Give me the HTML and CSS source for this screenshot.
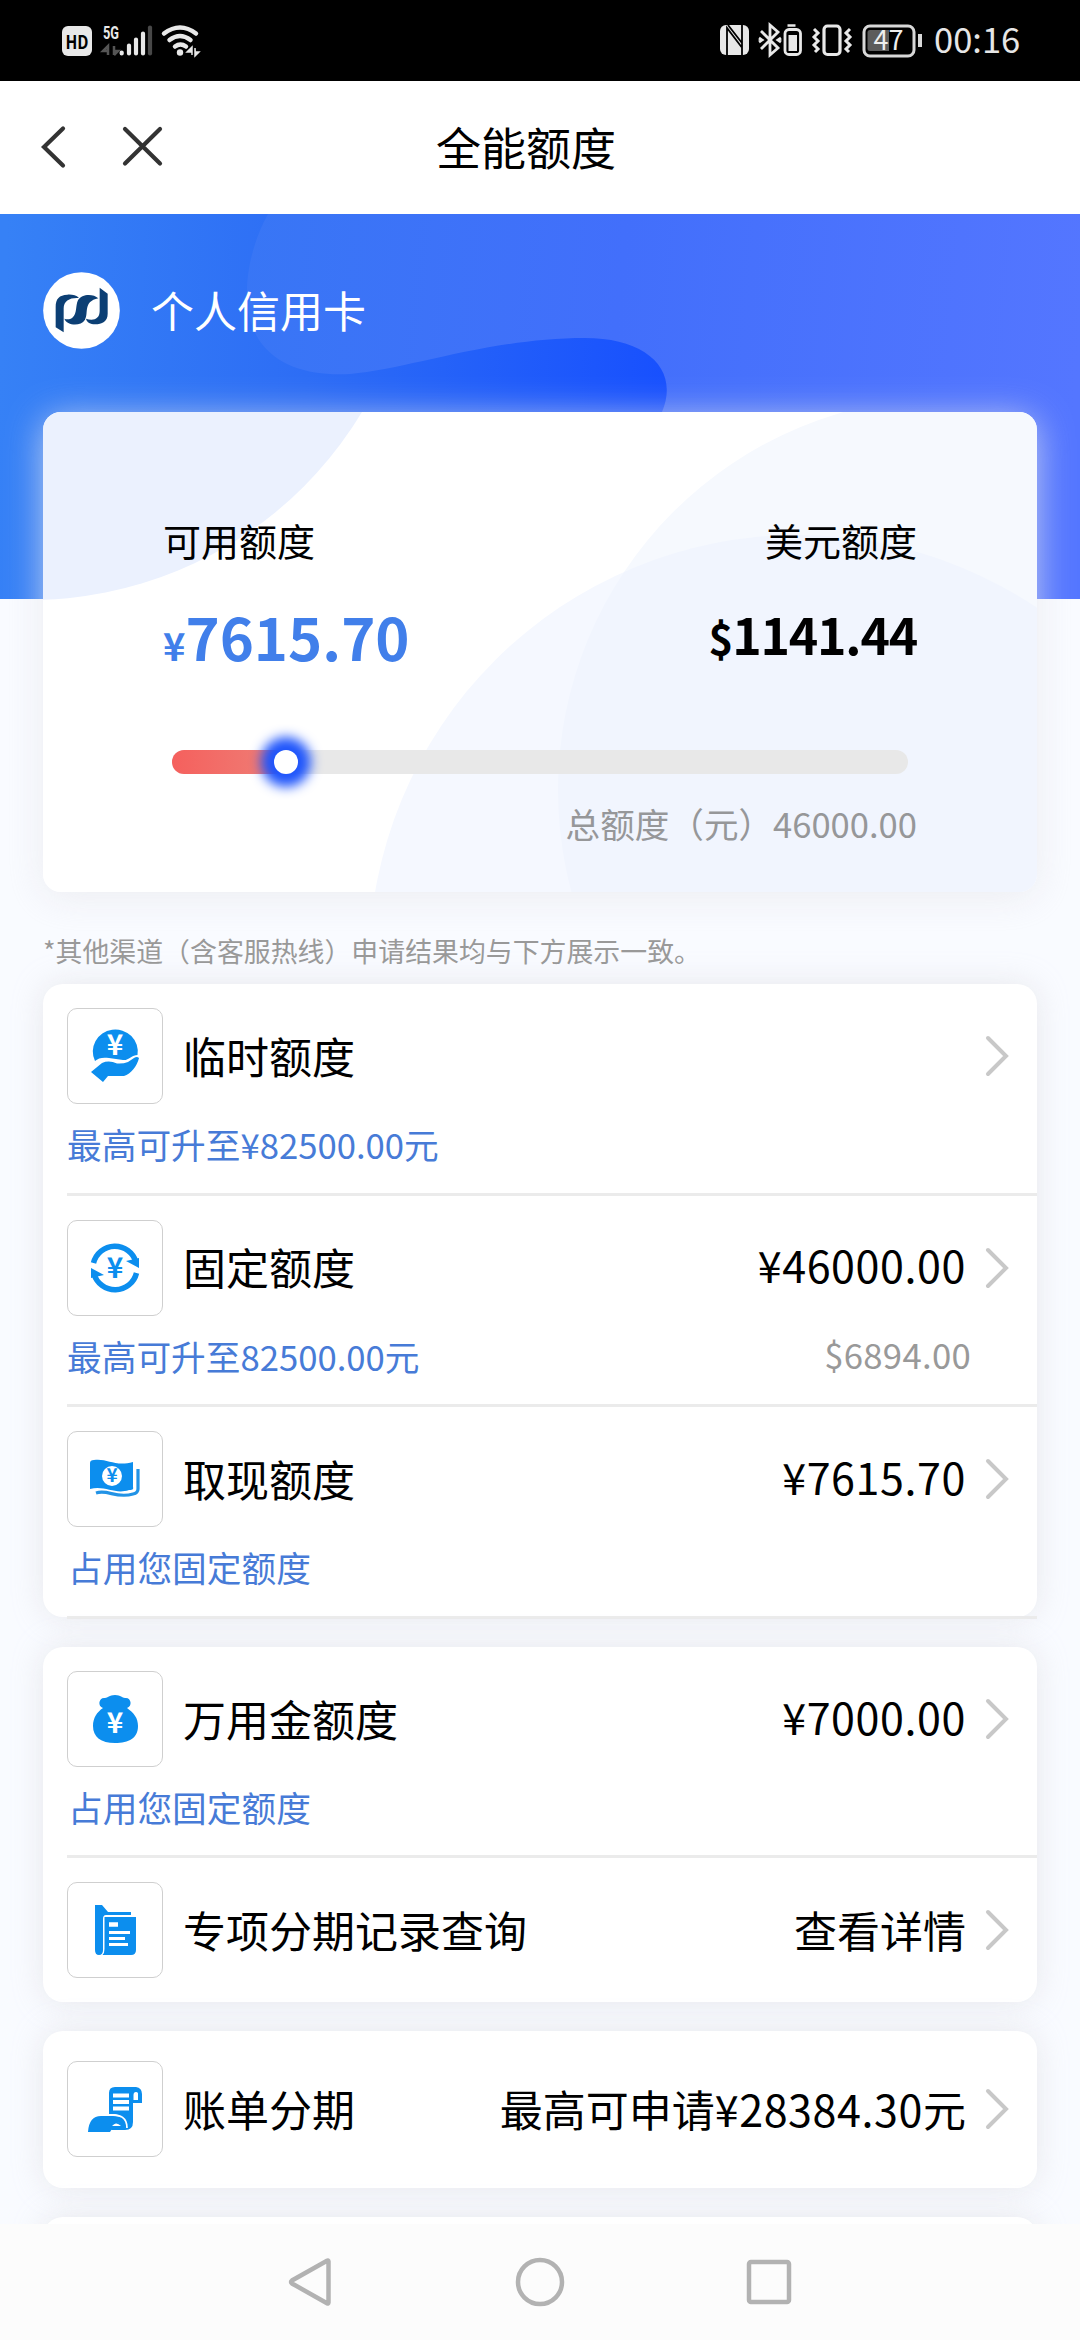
FILE: index.html
```html
<!DOCTYPE html>
<html lang="zh-CN">
<head>
<meta charset="utf-8">
<title>全能额度</title>
<link rel="stylesheet" href="styles.css">
</head>
<body>
<div class="screen">
  <header class="status">
    <svg class="status-left" viewBox="0 0 160 81" width="160" height="81">
      <rect x="2" y="26" width="30" height="30" rx="6" fill="#e8e8e8"/>
      <text x="17" y="48.500" class="hd" textLength="23" lengthAdjust="spacingAndGlyphs">HD</text>
      <text x="43" y="38.500" class="fiveg" textLength="16" lengthAdjust="spacingAndGlyphs">5G</text>
      <path d="M48 55V46l-5 5h5M54 46v9m0-4h4l-4 4" stroke="#555" stroke-width="2.500" fill="none"/>
      <g stroke="#e8e8e8" stroke-width="4.200" stroke-linecap="round"><path d="M61.700 53.500v-1M69 53.500v-8M76 53.500v-14M83 53.500v-20"/><path d="M90 53.500v-26" stroke="#484848"/></g>
      <g fill="none" stroke="#e8e8e8" stroke-width="4.500" stroke-linecap="round"><path d="M104 33.500q16-12 32 0M109.500 40q10.500-8 21 0M115 46.500q5.500-4 11 0"/></g>
      <circle cx="120" cy="52.500" r="3.200" fill="#e8e8e8"/>
      <path d="M132 55v-8l-5 5h5zM135 48v8l4-4h-3" fill="#e8e8e8" stroke="#e8e8e8" stroke-width="1.500"/>
    </svg>
    <div class="status-right">
      <svg viewBox="0 0 210 81" width="210" height="81">
        <rect x="2" y="25" width="29" height="30" rx="6" fill="#e8e8e8"/>
        <path d="M9 55V28L23.500 47M10 25L24 43V55M24 25v19" stroke="#000" stroke-width="1.800" fill="none"/>
        <path d="M43 31l17 17-8 7V25l8 7-17 17M41 38l3 2-3 2M63 38l-3 2 3 2" fill="none" stroke="#e8e8e8" stroke-width="2.800"/>
        <path d="M69.500 25.500h8" stroke="#e8e8e8" stroke-width="2.500"/>
        <rect x="67" y="29.500" width="15.500" height="25" rx="4" fill="none" stroke="#e8e8e8" stroke-width="2.800"/>
        <rect x="70.500" y="35" width="8.500" height="16" fill="#e8e8e8"/>
        <rect x="106" y="26" width="16" height="28.500" rx="3.500" fill="none" stroke="#e8e8e8" stroke-width="3.200"/>
        <path d="M96 29l4 4-4 4 4 4-4 4 4 4-3 3M132 29l-4 4 4 4-4 4 4 4-4 4 3 3" fill="none" stroke="#e8e8e8" stroke-width="3"/>
        <rect x="146" y="26" width="50" height="30" rx="6" fill="none" stroke="#d8d8d8" stroke-width="3"/>
        <path d="M152 30h19v21h-19q-2.500 0-2.500-2.500v-16q0-2.500 2.500-2.500z" fill="#5c5c5c"/>
        <path d="M202 34v13" stroke="#d8d8d8" stroke-width="4"/>
        <text x="170.500" y="50" class="batt">47</text>
      </svg>
      <span class="clock">00:16</span>
    </div>
  </header>

  <nav class="titlebar">
    <svg class="titlebar-icons" viewBox="0 0 180 132" width="180" height="132" fill="none" stroke="#333" stroke-width="4.200" stroke-linecap="round">
      <path d="M63 47.500L44 66l19 18.500M125 48l35 34.500M160 48l-35 34.500"/>
    </svg>
    <h1 class="page-title">全能额度</h1>
    <span class="titlebar-end"></span>
  </nav>

  <main class="content">
    <section class="hero">
      <svg class="hero-bg" viewBox="0 0 1080 385" width="1080" height="385">
        <defs>
          <linearGradient id="deep" gradientUnits="userSpaceOnUse" x1="0" y1="150" x2="680" y2="180"><stop offset="0" stop-color="#3681f6"/><stop offset=".45" stop-color="#2d6df5"/><stop offset="1" stop-color="#174ffe"/></linearGradient>
          <linearGradient id="light" gradientUnits="userSpaceOnUse" x1="240" y1="60" x2="1080" y2="140"><stop offset="0" stop-color="#3876f5"/><stop offset=".45" stop-color="#426ffb"/><stop offset="1" stop-color="#5476ff"/></linearGradient>
        </defs>
        <rect width="1080" height="385" fill="url(#deep)"/>
        <path d="M268 0C245 42 239 95 259 126C278 154 313 162 350 160C410 155 490 124 585 124C646 124 680 155 662 198V385H1080V0Z" fill="url(#light)"/>
      </svg>
      <div class="account">
        <svg class="logo" viewBox="39 66 231 229" width="77" height="77">
          <circle cx="154.500" cy="180.500" r="115" fill="#fff"/>
          <g fill="#0c3f74">
            <path d="M77 231V170C77 145 88 134 112 133C124 132 139 134 147 143C121 141 101 150 101 174V246Z"/>
            <path d="M205 144C190 130 155 130 144 150C136 166 142 190 127 202C120 208 110 208 103 205C110 225 151 230 165 208C177 188 158 154 205 144Z"/>
            <path d="M209 112L233 130V190C233 213 216 222 195 222C181 221 171 217 168 205C189 212 209 207 209 182Z"/>
          </g>
        </svg>
        <span class="account-name">个人信用卡</span>
      </div>
      <div class="limit-card">
        <svg class="limit-bg" viewBox="43 412 994 480" width="994" height="480">
          <defs><clipPath id="arc"><circle cx="951" cy="790" r="393"/></clipPath></defs>
          <rect x="43" y="412" width="994" height="480" fill="#fff"/>
          <circle cx="30" cy="213" r="387" fill="#ebf1fe"/>
          <circle cx="951" cy="790" r="393" fill="#f6f9fe"/>
          <circle cx="798" cy="964" r="429" fill="#f5f8ff"/>
          <circle cx="798" cy="964" r="429" fill="#f1f5fe" clip-path="url(#arc)"/>
        </svg>
        <div class="limit-labels"><span>可用额度</span><span>美元额度</span></div>
        <div class="limit-values">
          <div class="cny"><span class="cny-sign">¥</span>7615.70</div>
          <div class="usd"><span class="usd-sign">$</span>1141.44</div>
        </div>
        <div class="slider"><div class="slider-fill"></div><div class="slider-thumb"></div></div>
        <div class="limit-total">总额度（元）46000.00</div>
      </div>
    </section>

    <p class="notice">*其他渠道（含客服热线）申请结果均与下方展示一致。</p>

    <section class="list list-first">
      <div class="item">
        <div class="row">
          <div class="tile"><svg viewBox="0 0 96 96" width="96" height="96">
            <path d="M28 53A22.500 22 0 1 1 70.500 47C65 47 61 53 56 52L42 50C36 49 31 50 28 53Z" fill="#0c8eee"/>
            <path d="M24 64L35 55Q42 52 50 55.500Q56 56 61 54L67 50Q70 48 72 50C70 58 64 66 57 68H41L36 74Z" fill="#0c8eee"/>
            <text x="48" y="47" class="yen yen-white">¥</text></svg></div>
          <span class="name">临时额度</span><span class="value"></span>
          <svg class="chev" viewBox="0 0 24 42" width="24" height="42"><path d="M3 3l18 18L3 39"/></svg>
        </div>
        <div class="sub"><span>最高可升至¥82500.00元</span></div>
      </div>
      <div class="item">
        <div class="row">
          <div class="tile"><svg viewBox="0 0 96 96" width="96" height="96">
            <path d="M26.500 43A22 22 0 0 1 69 42M69.500 53A22 22 0 0 1 27 54" fill="none" stroke="#0c8eee" stroke-width="5.500"/>
            <path d="M59 41L72 48V38ZM37 55L24 48V58Z" fill="#0c8eee"/>
            <text x="48" y="58" class="yen">¥</text></svg></div>
          <span class="name">固定额度</span><span class="value">¥46000.00</span>
          <svg class="chev" viewBox="0 0 24 42" width="24" height="42"><path d="M3 3l18 18L3 39"/></svg>
        </div>
        <div class="sub"><span>最高可升至82500.00元</span><span class="sub-right">$6894.00</span></div>
      </div>
      <div class="item">
        <div class="row">
          <div class="tile"><svg viewBox="0 0 96 96" width="96" height="96">
            <path d="M23 32Q23 29 27 29C40 27 48 36 66 31V56C67 59 64 59 62 59C48 64 38 54 23 58Z" fill="#0c8eee"/>
            <path d="M29 62C41 58 49 68 66 63Q71 62 71 58V38" fill="none" stroke="#2293e6" stroke-width="3.200"/>
            <circle cx="45" cy="45" r="10" fill="#fff"/>
            <text x="45" y="51" class="yen yen-small">¥</text></svg></div>
          <span class="name">取现额度</span><span class="value">¥7615.70</span>
          <svg class="chev" viewBox="0 0 24 42" width="24" height="42"><path d="M3 3l18 18L3 39"/></svg>
        </div>
        <div class="sub sub-inset"><span>占用您固定额度</span></div>
      </div>
    </section>

    <section class="list list-second">
      <div class="item item-tight">
        <div class="row">
          <div class="tile"><svg viewBox="0 0 96 96" width="96" height="96">
            <path d="M36 37C30 35 32 26 38 27C41 27 42 24 48 24C54 24 55 27 58 27C64 26 66 35 60 37C67 42 71 47 71 55C71 67 62 72 48 72C34 72 26 66 26 55C26 47 30 41 36 37Z" fill="#0c8eee"/>
            <text x="48" y="62" class="yen yen-white">¥</text></svg></div>
          <span class="name">万用金额度</span><span class="value">¥7000.00</span>
          <svg class="chev" viewBox="0 0 24 42" width="24" height="42"><path d="M3 3l18 18L3 39"/></svg>
        </div>
        <div class="sub sub-inset"><span>占用您固定额度</span></div>
      </div>
      <div class="item item-short">
        <div class="row">
          <div class="tile"><svg viewBox="0 0 96 96" width="96" height="96">
            <path d="M28 23H35L41 30H64V33H39Q36 33 36 37V68Q36 73 32 73Q28 73 28 68Z" fill="#0c8eee"/>
            <path d="M37.500 35H69V68Q69 73 64 73H35.500Q37.500 71 37.500 67Z" fill="#0c8eee"/>
            <path d="M42 50.500H63M42 56.500H58M42 62.500H61" stroke="#fff" stroke-width="2.800"/><path d="M42 42.500H51" stroke="#fff" stroke-width="4.500"/></svg></div>
          <span class="name">专项分期记录查询</span><span class="value value-text">查看详情</span>
          <svg class="chev" viewBox="0 0 24 42" width="24" height="42"><path d="M3 3l18 18L3 39"/></svg>
        </div>
      </div>
    </section>

    <section class="list list-third">
      <div class="item item-single">
        <div class="row">
          <div class="tile"><svg viewBox="0 0 96 96" width="96" height="96">
            <path d="M42 53V32Q42 26 48 26H69Q75 27 75 33V42H66V61Q66 69 58 69H44Q45 62 53 61C56 57 53 53 46 53Z" fill="#0c8eee"/>
            <path d="M21 71Q22 55 34 55H46C55 55 59 59 58 64Q53 60 48 63L43 71Z" fill="#0c8eee"/>
            <path d="M46 34.500H62M46 41H62M46 47.500H62" stroke="#fff" stroke-width="4.200"/><path d="M66.500 39V34Q66.500 31 69 31T71 34V39Z" fill="#fff"/>
            <path d="M42 54C54 53 60 57 60 67" fill="none" stroke="#fff" stroke-width="1.800"/><path d="M45 65Q49 60 54 65Z" fill="#fff"/></svg></div>
          <span class="name">账单分期</span><span class="value value-text">最高可申请<span class="amount">¥28384.30</span>元</span>
          <svg class="chev" viewBox="0 0 24 42" width="24" height="42"><path d="M3 3l18 18L3 39"/></svg>
        </div>
      </div>
    </section>

    <section class="list list-next"></section>
  </main>

  <footer class="sysnav">
    <svg viewBox="0 0 50 50" width="50" height="50"><path d="M42.500 4.500V45.500Q42.500 47 41 46.200L6 26.500Q4 25 6 23.500L41 3.800Q42.500 3 42.500 4.500Z"/></svg>
    <svg viewBox="0 0 50 50" width="50" height="50"><circle cx="25" cy="25" r="22"/></svg>
    <svg viewBox="0 0 50 50" width="50" height="50"><rect x="5" y="5" width="40" height="40" rx="2"/></svg>
  </footer>
</div>
</body>
</html>
```

FILE: styles.css
```css
* { box-sizing: border-box; }
body {
  margin: 0;
  background: #f9fbff;
  color: #000;
  font-family: "Noto Sans CJK SC", "Noto Sans", sans-serif;
}
svg { display: block; flex: none; }
.screen { width: 1080px; height: 2340px; display: flex; flex-direction: column; overflow: hidden; }

.status { height: 81px; flex: none; background: #000; display: flex; justify-content: space-between; padding: 0 60px; }
.status-right { display: flex; }
.hd { font-size: 19px; font-weight: 700; text-anchor: middle; fill: #000; }
.fiveg { font: 700 18px "Roboto", sans-serif; fill: #e8e8e8; }
.batt { font-size: 27px; text-anchor: middle; fill: #eee; }
.clock { font-size: 34.500px; line-height: 77px; color: #e6e6e6; width: 86px; margin-left: 6px; }

.titlebar { height: 133px; flex: none; background: #fff; display: flex; justify-content: space-between; }
.titlebar-end { width: 208px; }
.page-title { margin: 0; font-size: 45px; font-weight: 400; line-height: 132px; }

.content { height: 2010px; flex: none; overflow: hidden; }
.hero { position: relative; padding: 58px 43px 0; }
.hero-bg { position: absolute; left: 0; top: 0; z-index: -1; }
.account { height: 77px; display: flex; align-items: center; gap: 31px; color: #fff; }
.account-name { font-size: 43px; line-height: 64px; padding-bottom: 4px; }

.limit-card {
  position: relative;
  height: 480px;
  margin-top: 63px;
  padding: 103px 120px 0;
  border-radius: 18px;
  overflow: hidden;
  isolation: isolate;
  box-shadow: 0 5px 36px rgba(232, 232, 236, .75);
}
.limit-bg { position: absolute; left: 0; top: 0; z-index: -1; }
.limit-labels { display: flex; justify-content: space-between; font-size: 38px; line-height: 50px; }
.limit-values { display: flex; justify-content: space-between; height: 86px; margin-top: 28px; font-weight: 700; }
.cny { color: #417fea; font-size: 58px; line-height: 86px; }
.cny-sign { font-size: 38px; }
.usd { font-size: 50px; line-height: 81px; letter-spacing: -1.200px; }
.usd-sign { font-size: 42px; }
.slider { position: relative; height: 24px; margin: 71px 9px 0; border-radius: 12px; background: #e8e8e8; }
.slider-fill { width: 114px; height: 24px; border-radius: 12px; background: linear-gradient(90deg, #f5605d, #ee8078); }
.slider-thumb { position: absolute; left: 102px; top: 0; width: 24px; height: 24px; border-radius: 50%; background: #fff; box-shadow: 0 0 12px 13px #1f55fb; }
.limit-total { margin-top: 24px; font-size: 34.600px; line-height: 50px; text-align: right; color: #969799; }

.notice { margin: 39px 43px 0; height: 53px; font-size: 26.900px; line-height: 40px; color: #999; }

.list { margin: 0 43px; background: #fff; border-radius: 20px; box-shadow: 0 0 30px rgba(225, 225, 230, .75); }
.list-first { height: 633px; }
.list-second { height: 355px; margin-top: 30px; }
.list-third { height: 157px; margin-top: 29px; }
.list-next { height: 200px; margin-top: 29px; }
.item { margin-left: 24px; height: 211.500px; padding: 24px 28px 0 0; border-bottom: 3px solid #ebebeb; }
.item-tight { height: 211px; }
.item-short, .item-single { border-bottom: 0; height: 145px; }
.item-single { padding-top: 30px; }
.row { display: flex; align-items: center; height: 96px; }
.tile { width: 96px; height: 96px; flex: none; border: 1px solid #cfcfcf; border-radius: 10px; }
.tile svg { margin: -1px; }
.name { margin-left: 20px; font-size: 43px; line-height: 64px; padding-bottom: 3px; }
.value { margin-left: auto; margin-right: 19px; font-size: 43px; line-height: 64px; padding-bottom: 7px; letter-spacing: .600px; }
.value-text { padding-bottom: 3px; letter-spacing: 0; }
.amount { letter-spacing: .600px; }
.chev { fill: none; stroke: #c8c8c8; stroke-width: 4; stroke-linecap: round; }
.sub { display: flex; justify-content: space-between; margin-top: 15px; font-size: 34.700px; line-height: 50px; color: #477bd7; }
.sub-inset { padding-left: 1px; }
.sub-right { margin-right: 38px; margin-top: -2px; color: #999; letter-spacing: .300px; }
.yen { font-size: 28px; font-weight: 700; text-anchor: middle; fill: #0c8eee; }
.yen-white { fill: #fff; }
.yen-small { font-size: 19px; }

.sysnav { position: relative; flex: none; height: 116px; background: #fcfcfc; display: flex; justify-content: center; gap: 179px; padding-top: 33px; }
.sysnav svg { fill: none; stroke: #b2b2b2; stroke-width: 4.500; }
```
